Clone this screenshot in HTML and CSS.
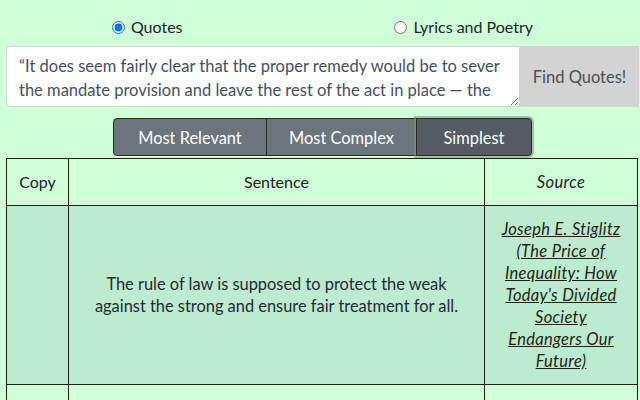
FILE: index.html
```html
<!DOCTYPE html>
<html>
<head>
<meta charset="utf-8">
<link rel="stylesheet" href="styles.css">
</head>
<body>
<div class="page">
  <div class="modes">
    <label class="mode"><input type="radio" name="mode" checked> Quotes</label>
    <label class="mode"><input type="radio" name="mode"> Lyrics and Poetry</label>
  </div>
  <div class="search">
    <textarea class="query">“It does seem fairly clear that the proper remedy would be to sever the mandate provision and leave the rest of the act in place — the justices who dissented from the ruling would have struck down the whole law.”</textarea>
    <button class="find">Find Quotes!</button>
  </div>
  <div class="sorts">
    <div class="group">
      <button class="sort">Most Relevant</button>
      <button class="sort">Most Complex</button>
      <button class="sort active">Simplest</button>
    </div>
  </div>
  <table class="results">
    <colgroup><col class="c1"><col class="c2"><col class="c3"></colgroup>
    <thead>
      <tr><th>Copy</th><th>Sentence</th><th class="src">Source</th></tr>
    </thead>
    <tbody>
      <tr class="odd">
        <td></td>
        <td class="sent">The rule of law is supposed to protect the weak against the strong and ensure fair treatment for all.</td>
        <td class="src"><a href="#">Joseph E. Stiglitz (The Price of Inequality: How Today's Divided Society Endangers Our Future)</a></td>
      </tr>
      <tr class="next">
        <td></td>
        <td></td>
        <td></td>
      </tr>
    </tbody>
  </table>
</div>
</body>
</html>
```

FILE: styles.css
```css
html, body {
  margin: 0;
  padding: 0;
  background: #d0fed8;
}
body {
  font-family: "Lato", "Open Sans", sans-serif;
  font-size: 16px;
  color: #212529;
  overflow: hidden;
}
.page {
  padding: 0 1px 0 6px;
}
.modes {
  display: flex;
  justify-content: space-around;
  padding-top: 16px;
  height: 30px;
  box-sizing: border-box;
  margin-bottom: 16px;
}
.mode {
  display: flex;
  align-items: center;
  gap: 4px;
  font-size: 16px;
  line-height: 22px;
  height: 22px;
}
.mode input {
  margin: 0 2px 0 0;
  width: 13px;
  height: 13px;
}
.search {
  display: flex;
  height: 61px;
}
.query {
  flex: 1;
  margin: 0;
  box-sizing: border-box;
  height: 61px;
  padding: 7px 12px 6px;
  border: 1px solid #ced4da;
  border-radius: 4px 0 0 4px;
  background: #fff;
  color: #46505a;
  font-family: "Lato", "Open Sans", sans-serif;
  font-size: 16.5px;
  line-height: 24px;
  resize: vertical;
  overflow: hidden;
}
.find {
  width: 119px;
  margin: 0;
  border: none;
  background: #d3d3d3;
  color: #495057;
  font-family: "Lato", "Open Sans", sans-serif;
  font-size: 16.5px;
  padding: 0;
}
.sorts {
  display: flex;
  justify-content: center;
  margin-top: 11px;
}
.group {
  display: flex;
}
.sort {
  height: 38px;
  margin: 0;
  padding: 0;
  white-space: nowrap;
  background: #6c757d;
  color: #fff;
  border: 1px solid #2a2a1c;
  font-family: "Lato", "Open Sans", sans-serif;
  font-size: 16.4px;
}
.sort + .sort {
  margin-left: -1px;
}
.sort:first-child {
  border-radius: 4px 0 0 4px;
  width: 154px;
}
.sort:nth-child(2) {
  width: 151px;
}
.sort:last-child {
  border-radius: 0 4px 4px 0;
  width: 116px;
}
.sort.active {
  background: #545b62;
  box-shadow: 0 0 0 2px rgba(130, 150, 140, 0.6);
  position: relative;
}
.results {
  border-collapse: collapse;
  width: 631px;
  margin-top: 2px;
  table-layout: fixed;
  font-size: 16px;
  line-height: 22px;
}
.c1 { width: 62px; }
.c2 { width: 416px; }
.c3 { width: 153px; }
.results th, .results td {
  border: 1px solid #231a10;
  padding: 12px;
  text-align: center;
  vertical-align: middle;
  font-weight: normal;
}
.results th.src {
  font-style: italic;
  letter-spacing: 0.4px;
  font-size: 16.5px;
}
.results td.sent {
  font-size: 16.4px;
  color: #1e2a36;
}
.results td.src {
  padding: 12px 14px;
}
.results tr.odd td {
  background: #bdebd0;
}
.results tr.next td {
  height: 40px;
}
.results td.src a {
  color: #231f16;
  font-style: italic;
  font-size: 16.5px;
  letter-spacing: 0.3px;
  text-decoration: underline;
}
```
